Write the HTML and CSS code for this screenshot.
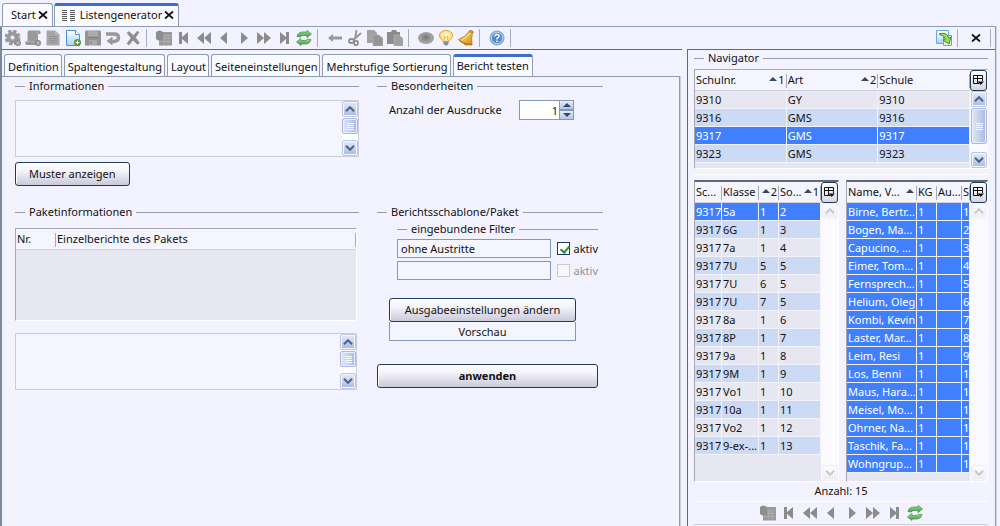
FILE: index.html
```html
<!DOCTYPE html>
<html lang="de">
<head>
    <meta charset="UTF-8">
    <meta name="viewport" content="width=device-width, initial-scale=1">
    <title>Listengenerator</title>
    <link rel="stylesheet" href="styles.css">
</head>
<body>
    <!-- Icon set -->
    <svg class="sprite" aria-hidden="true">
        <linearGradient id="greenFill" x1="0" y1="0" x2="0" y2="1"><stop offset="0" stop-color="#a5dc9c"/><stop offset="1" stop-color="#3f9a3c"/></linearGradient>
        <linearGradient id="blueFill" x1="0" y1="0" x2="0" y2="1"><stop offset="0" stop-color="#ffffff"/><stop offset="1" stop-color="#a5d4f5"/></linearGradient>
        <linearGradient id="goldFill" x1="0" y1="0" x2="1" y2="1"><stop offset="0" stop-color="#ffe27a"/><stop offset="1" stop-color="#d98e10"/></linearGradient>
        <radialGradient id="bulbFill"><stop offset="0" stop-color="#ffffff"/><stop offset="1" stop-color="#ffdf7c"/></radialGradient>
        <radialGradient id="helpFill"><stop offset="0" stop-color="#3d78bd"/><stop offset="1" stop-color="#6ba0d8"/></radialGradient>
        <symbol id="gear" viewBox="0 0 16 16"><g fill="none" stroke="#999"><circle cx="7.500" cy="7.500" r="4" stroke-width="4"/><circle cx="7.500" cy="7.500" r="6.500" stroke-width="3" stroke-dasharray="3.200 1.900"/></g><circle cx="13" cy="13" r="3" fill="#888"/><path d="M11 13h4M13 11v4" stroke="#c4c4c4"/></symbol>
        <symbol id="scroll" viewBox="0 0 16 16"><path d="M4 .5h10q2 0 1.500 3.500h-2.500v7q0 4-2.500 4H1.500Q0 14.500 .5 11h2V3Q2.500 .5 4 .5z" fill="#999"/><path d="M12.500 1.500V4M1 11.500h8.500" stroke="#b4b4b4" fill="none"/><circle cx="13" cy="13" r="3" fill="#888"/><path d="M11 13h4M13 11v4" stroke="#c4c4c4"/></symbol>
        <symbol id="page" viewBox="0 0 16 16"><path d="M1.500 .5h8.500l4.500 4v11h-13z" fill="#a6a6a6"/><path d="M10 .5v4h4.500" fill="#bbb"/><path d="M4 6.500h8M4 8.500h8M4 10.500h8M4 12.500h8" stroke="#959595"/></symbol>
        <symbol id="new" viewBox="0 0 16 16"><path d="M1.500 .5h9l4 4v11h-13z" fill="url(#blueFill)" stroke="#4b93cf"/><path d="M10.500 .5v4h4" fill="#fff" stroke="#4b93cf"/><circle cx="12.500" cy="12.500" r="3.500" fill="#4f9a35"/><path d="M10.500 12.500h4M12.500 10.500v4" stroke="#fff"/></symbol>
        <symbol id="save" viewBox="0 0 16 16"><path d="M1 .5h14l1 1v14H0v-14z" fill="#939393"/><path d="M3 1h10v5.500H3zM4 10h8v5H4z" fill="#aaa"/><path d="M3 7.500h10M6 11v3" stroke="#808080"/></symbol>
        <symbol id="undo" viewBox="0 0 16 16"><path d="M1 4h8q4.500 0 4.500 3.500T9 11.500H6" fill="none" stroke="#999" stroke-width="3.400"/><path d="M7.500 6.500v9L1.500 11z" fill="#999"/></symbol>
        <symbol id="delete" viewBox="0 0 16 16"><path d="M2 3l2-1.500 4.500 4L12.500 1l1.500 1.500L10.500 7.500l4 5.500-2 1.500-4.500-4.500L4 15l-2-1.500 4-5.500z" fill="#8f8f8f" stroke="#8f8f8f" stroke-width=".6" stroke-linejoin="round"/></symbol>
        <symbol id="sheet" viewBox="0 0 16 16"><path d="M4 2h12v13.500H3V8z" fill="#9a9a9a"/><path d="M7 5.500h8M4 8.500h11M4 11.500h11M8.500 5v9M12 5v9" stroke="#adadad"/><path d="M0 2q3.500-3 7 0v7q-3.500 3-7 0z" fill="#8e8e8e"/></symbol>
        <symbol id="first" viewBox="0 0 16 16"><path d="M3 2h3v5l6-5v12L6 9v5H3z" fill="#8c8c8c"/></symbol>
        <symbol id="rewind" viewBox="0 0 16 16"><path d="M1 8l7-6v12zM8 8l7-6v12z" fill="#8c8c8c"/></symbol>
        <symbol id="prev" viewBox="0 0 16 16"><path d="M4 8l7-6v12z" fill="#8c8c8c"/></symbol>
        <symbol id="next" viewBox="0 0 16 16"><path d="M12 8L5 2v12z" fill="#8c8c8c"/></symbol>
        <symbol id="forward" viewBox="0 0 16 16"><path d="M15 8L8 2v12zM8 8L1 2v12z" fill="#8c8c8c"/></symbol>
        <symbol id="last" viewBox="0 0 16 16"><path d="M13 2h-3v5L4 2v12l6-5v5h3z" fill="#8c8c8c"/></symbol>
        <symbol id="refresh" viewBox="0 0 16 16"><g fill="url(#greenFill)" stroke="#3c9140" stroke-width=".7"><path d="M1 6.500Q2 1.500 8 2h3V.5L15.500 4 11 7.500V5.500H8Q5 5 4.500 7z"/><path d="M15 9.500q-1 5-7 4.500H5v1.500L.5 12 5 8.500v2h3q3 .5 3.500-1.500z"/></g></symbol>
        <symbol id="back" viewBox="0 0 16 16"><path d="M1 8l5-4v2.500h9v3H6V12z" fill="#999"/></symbol>
        <symbol id="cut" viewBox="0 0 16 16"><path d="M9.500 0L8 9M14 3L6.500 10" stroke="#999" stroke-width="2"/><g fill="none" stroke="#8c8c8c" stroke-width="1.800"><ellipse cx="4.500" cy="11" rx="2.500" ry="2"/><ellipse cx="9" cy="13" rx="2" ry="2.200"/></g></symbol>
        <symbol id="copy" viewBox="0 0 16 16"><path d="M0 0h7l3 3v10H0z" fill="#a2a2a2"/><path d="M6 5h6l4 3.500V16H6z" fill="#959595" stroke="#b4b4b4" stroke-width=".6"/></symbol>
        <symbol id="paste" viewBox="0 0 16 16"><path d="M0 2h4l1-2h4l1 2h3v12H0z" fill="#8c8c8c"/><path d="M7 5h5l4 3.500V16H7z" fill="#a0a0a0" stroke="#bbb" stroke-width=".6"/></symbol>
        <symbol id="eye" viewBox="0 0 16 16"><ellipse cx="8" cy="8" rx="8" ry="6" fill="#a0a0a0"/><ellipse cx="8" cy="7.500" rx="4" ry="3.500" fill="#8c8c8c"/><circle cx="8" cy="7.500" r="1.500" fill="#777"/></symbol>
        <symbol id="bulb" viewBox="0 0 16 16"><path d="M5 10.500Q1 8 1.500 5 2.500 .5 8 .5t6.500 4.500q.5 3-3.500 5.500v1H5z" fill="url(#bulbFill)" stroke="#e2a02c"/><path d="M6.500 10L6 6l2 1.500L10 6l-.5 4" fill="none" stroke="#f0b94c"/><path d="M5.500 11.500h5v2.500L9 15.500H7L5.500 14z" fill="#8090a8"/></symbol>
        <symbol id="bell" viewBox="0 0 16 16"><path d="M.5 9.500Q7 7.500 11 1.500l3.500 1q-1.500 6-.5 12.500Q6 15.500 .5 9.500z" fill="url(#goldFill)" stroke="#ad6d0c" stroke-width=".8"/><path d="M10.500 1.500Q12 0 14 .8t1 2.200M1 10.500q5.500 4.500 13 3.500M6 13q1 3.500 4 1.500" fill="#e0a02b" stroke="#ad6d0c" stroke-width=".8"/><path d="M5 9.500Q9 7 11.500 3.500" fill="none" stroke="#fff0a8"/></symbol>
        <symbol id="help" viewBox="0 0 16 16"><circle cx="8" cy="8" r="7" fill="url(#helpFill)" stroke="#7ba6d4"/><circle cx="8" cy="8" r="5.800" fill="none" stroke="#d8e8f8" stroke-width=".8"/><path d="M6 6.500Q6 4.500 8 4.500t2 1.800Q10 7.500 8 8.200V9.500M8 10.500V12" fill="none" stroke="#fff" stroke-width="1.500"/></symbol>
        <symbol id="transfer" viewBox="0 0 16 16"><path d="M.5 .5h12v13H.5z" fill="url(#blueFill)" stroke="#6aa6da"/><path d="M7.500 5.500h8v10h-8z" fill="#dff0ff" stroke="#6aa6da"/><path d="M3 4q8-2.500 9.500 4l2.500-.5-2 6.500-6-4 2.500-1Q8.500 5.500 3 4z" fill="#a5dc4c" stroke="#3e8e2c"/></symbol>
        <symbol id="list" viewBox="0 0 13 11"><path d="M0 .5h5M0 2.500h5M0 4.500h5M0 6.500h5M0 8.500h5M0 10.500h5M8 .5h5M8 2.500h5M8 4.500h5M8 6.500h5M8 8.500h5M8 10.500h5" stroke="#555"/></symbol>
        <symbol id="close" viewBox="0 0 10 10"><path d="M1 1.500l8 7M9 1.500l-8 7" stroke="#111" stroke-width="1.700"/></symbol>
        <symbol id="columns" viewBox="0 0 11 11"><path d="M9.500 6V.5H.5v8H6M.5 3.500h9M4.500 .5v8" fill="none" stroke="#111"/><path d="M4.500 6.500H11L7.700 10z" fill="#111"/></symbol>
        <symbol id="up" viewBox="0 0 10 6"><path d="M1 5.200l4-4 4 4" fill="none" stroke="currentColor" stroke-width="2"/></symbol>
        <symbol id="down" viewBox="0 0 10 6"><path d="M1 .8l4 4 4-4" fill="none" stroke="currentColor" stroke-width="2"/></symbol>
        <symbol id="sort" viewBox="0 0 8 4"><path d="M0 4l4-4 4 4z" fill="#33475f"/></symbol>
    </svg>

    <!-- Window tabs -->
    <nav class="window-tabs">
        <button class="window-tab">Start <svg class="close"><use href="#close"/></svg></button>
        <button class="window-tab active"><svg class="list"><use href="#list"/></svg> Listengenerator <svg class="close"><use href="#close"/></svg></button>
    </nav>

    <div class="frame">
        <div class="toolbar">
            <button aria-label="Einstellungen"><svg><use href="#gear"/></svg></button>
            <button aria-label="Skript"><svg><use href="#scroll"/></svg></button>
            <button aria-label="Seite"><svg><use href="#page"/></svg></button>
            <button aria-label="Neu"><svg><use href="#new"/></svg></button>
            <button aria-label="Speichern"><svg><use href="#save"/></svg></button>
            <button aria-label="Rückgängig"><svg><use href="#undo"/></svg></button>
            <button aria-label="Löschen"><svg><use href="#delete"/></svg></button>
            <span class="sep"></span>
            <button aria-label="Datenblatt"><svg><use href="#sheet"/></svg></button>
            <button aria-label="Erster"><svg><use href="#first"/></svg></button>
            <button aria-label="Schnell zurück"><svg><use href="#rewind"/></svg></button>
            <button aria-label="Voriger"><svg><use href="#prev"/></svg></button>
            <button aria-label="Nächster"><svg><use href="#next"/></svg></button>
            <button aria-label="Schnell vor"><svg><use href="#forward"/></svg></button>
            <button aria-label="Letzter"><svg><use href="#last"/></svg></button>
            <button aria-label="Aktualisieren"><svg><use href="#refresh"/></svg></button>
            <span class="sep"></span>
            <button aria-label="Zurück"><svg><use href="#back"/></svg></button>
            <button aria-label="Ausschneiden"><svg><use href="#cut"/></svg></button>
            <button aria-label="Kopieren"><svg><use href="#copy"/></svg></button>
            <button aria-label="Einfügen"><svg><use href="#paste"/></svg></button>
            <span class="sep"></span>
            <button aria-label="Ansicht"><svg><use href="#eye"/></svg></button>
            <button aria-label="Tipp"><svg><use href="#bulb"/></svg></button>
            <button aria-label="Erinnerung"><svg><use href="#bell"/></svg></button>
            <span class="sep"></span>
            <button aria-label="Hilfe"><svg><use href="#help"/></svg></button>
            <span class="sep"></span>
            <div class="toolbar-right">
                <button aria-label="Übertragen"><svg><use href="#transfer"/></svg></button>
                <span class="sep"></span>
                <button class="wide" aria-label="Schließen"><svg class="close"><use href="#close"/></svg></button>
                <span class="sep"></span>
            </div>
        </div>

        <div class="content">
            <main class="editor">
                <nav class="tabs">
                    <button class="tab">Definition</button>
                    <button class="tab">Spaltengestaltung</button>
                    <button class="tab">Layout</button>
                    <button class="tab">Seiteneinstellungen</button>
                    <button class="tab">Mehrstufige Sortierung</button>
                    <button class="tab active">Bericht testen</button>
                </nav>
                <form class="form">
                    <fieldset>
                        <legend>Informationen</legend>
                        <div class="memo">
                            <textarea aria-label="Informationen"></textarea>
                            <div class="scrollbar">
                                <button type="button" aria-label="Nach oben"><svg><use href="#up"/></svg></button>
                                <span class="thumb"></span>
                                <button type="button" class="end" aria-label="Nach unten"><svg><use href="#down"/></svg></button>
                            </div>
                        </div>
                        <button type="button" class="btn sample">Muster anzeigen</button>
                    </fieldset>

                    <fieldset>
                        <legend>Besonderheiten</legend>
                        <div class="copies">
                            <label for="copies">Anzahl der Ausdrucke</label>
                            <input id="copies" type="text" value="1">
                            <div class="spinner">
                                <button type="button" aria-label="Mehr"><svg><use href="#sort"/></svg></button>
                                <button type="button" aria-label="Weniger"><svg class="flip"><use href="#sort"/></svg></button>
                            </div>
                        </div>
                    </fieldset>

                    <fieldset>
                        <legend>Paketinformationen</legend>
                        <div class="grid-box package">
                            <table>
                                <colgroup><col class="w-nr"><col></colgroup>
                                <thead><tr><th>Nr.</th><th>Einzelberichte des Pakets</th></tr></thead>
                            </table>
                        </div>
                        <div class="memo">
                            <textarea aria-label="Paketbeschreibung"></textarea>
                            <div class="scrollbar">
                                <button type="button" aria-label="Nach oben"><svg><use href="#up"/></svg></button>
                                <span class="thumb"></span>
                                <button type="button" class="end" aria-label="Nach unten"><svg><use href="#down"/></svg></button>
                            </div>
                        </div>
                    </fieldset>

                    <fieldset>
                        <legend>Berichtsschablone/Paket</legend>
                        <fieldset class="filters">
                            <legend>eingebundene Filter</legend>
                            <div class="filter">
                                <input type="text" aria-label="Filter 1" value="ohne Austritte">
                                <label><input type="checkbox" checked> aktiv</label>
                            </div>
                            <div class="filter">
                                <input type="text" aria-label="Filter 2">
                                <label class="off"><input type="checkbox" disabled> aktiv</label>
                            </div>
                        </fieldset>
                        <div class="output">
                            <button type="button" class="btn">Ausgabeeinstellungen ändern</button>
                            <input type="text" aria-label="Ausgabe" value="Vorschau" readonly>
                        </div>
                        <button type="submit" class="btn apply">anwenden</button>
                    </fieldset>
                </form>
            </main>

            <aside class="navigator">
                <fieldset>
                    <legend>Navigator</legend>
                    <div class="grid-box schools">
                        <table>
                            <thead><tr>
                                <th>Schulnr.<span class="order"><svg><use href="#sort"/></svg>1</span></th>
                                <th>Art<span class="order"><svg><use href="#sort"/></svg>2</span></th>
                                <th>Schule</th>
                            </tr></thead>
                            <tbody>
                                <tr><td>9310</td><td>GY</td><td>9310</td></tr>
                                <tr class="alt"><td>9316</td><td>GMS</td><td>9316</td></tr>
                                <tr class="sel"><td>9317</td><td>GMS</td><td>9317</td></tr>
                                <tr class="alt"><td>9323</td><td>GMS</td><td>9323</td></tr>
                            </tbody>
                        </table>
                        <div class="side">
                            <button class="column-btn" aria-label="Spalten"><svg><use href="#columns"/></svg></button>
                            <div class="scrollbar">
                                <button aria-label="Nach oben"><svg><use href="#up"/></svg></button>
                                <span class="thumb tall"></span>
                                <button class="end" aria-label="Nach unten"><svg><use href="#down"/></svg></button>
                            </div>
                        </div>
                    </div>
                </fieldset>

                <div class="lists">
                    <div class="grid-box classes">
                        <table>
                            <colgroup><col class="w-school"><col class="w-class"><col class="w-num"><col></colgroup>
                            <thead><tr>
                                <th>Sc...</th>
                                <th>Klasse</th>
                                <th><span class="order"><svg><use href="#sort"/></svg>2</span></th>
                                <th>So...<span class="order"><svg><use href="#sort"/></svg>1</span></th>
                            </tr></thead>
                            <tbody>
                                <tr class="sel"><td>9317</td><td>5a</td><td>1</td><td>2</td></tr>
                                <tr class="alt"><td>9317</td><td>6G</td><td>1</td><td>3</td></tr>
                                <tr><td>9317</td><td>7a</td><td>1</td><td>4</td></tr>
                                <tr class="alt"><td>9317</td><td>7U</td><td>5</td><td>5</td></tr>
                                <tr><td>9317</td><td>7U</td><td>6</td><td>5</td></tr>
                                <tr class="alt"><td>9317</td><td>7U</td><td>7</td><td>5</td></tr>
                                <tr><td>9317</td><td>8a</td><td>1</td><td>6</td></tr>
                                <tr class="alt"><td>9317</td><td>8P</td><td>1</td><td>7</td></tr>
                                <tr><td>9317</td><td>9a</td><td>1</td><td>8</td></tr>
                                <tr class="alt"><td>9317</td><td>9M</td><td>1</td><td>9</td></tr>
                                <tr><td>9317</td><td>Vo1</td><td>1</td><td>10</td></tr>
                                <tr class="alt"><td>9317</td><td>10a</td><td>1</td><td>11</td></tr>
                                <tr><td>9317</td><td>Vo2</td><td>1</td><td>12</td></tr>
                                <tr class="alt"><td>9317</td><td>9-ex-...</td><td>1</td><td>13</td></tr>
                            </tbody>
                        </table>
                        <div class="side">
                            <button class="column-btn" aria-label="Spalten"><svg><use href="#columns"/></svg></button>
                            <div class="scrollbar idle">
                                <button aria-label="Nach oben"><svg><use href="#up"/></svg></button>
                                <button class="end" aria-label="Nach unten"><svg><use href="#down"/></svg></button>
                            </div>
                        </div>
                    </div>

                    <div class="grid-box pupils">
                        <table>
                            <colgroup><col><col class="w-kg"><col class="w-au"><col class="w-s"></colgroup>
                            <thead><tr>
                                <th>Name, V...<span class="order"><svg><use href="#sort"/></svg></span></th>
                                <th>KG</th>
                                <th>Au...</th>
                                <th>S</th>
                            </tr></thead>
                            <tbody>
                                <tr class="sel"><td>Birne, Bertr...</td><td>1</td><td></td><td>1</td></tr>
                                <tr class="sel"><td>Bogen, Ma...</td><td>1</td><td></td><td>2</td></tr>
                                <tr class="sel"><td>Capucino, ...</td><td>1</td><td></td><td>3</td></tr>
                                <tr class="sel"><td>Eimer, Tom...</td><td>1</td><td></td><td>4</td></tr>
                                <tr class="sel"><td>Fernsprech...</td><td>1</td><td></td><td>5</td></tr>
                                <tr class="sel"><td>Helium, Oleg</td><td>1</td><td></td><td>6</td></tr>
                                <tr class="sel"><td>Kombi, Kevin</td><td>1</td><td></td><td>7</td></tr>
                                <tr class="sel"><td>Laster, Mar...</td><td>1</td><td></td><td>8</td></tr>
                                <tr class="sel"><td>Leim, Resi</td><td>1</td><td></td><td>9</td></tr>
                                <tr class="sel"><td>Los, Benni</td><td>1</td><td></td><td>1</td></tr>
                                <tr class="sel"><td>Maus, Hara...</td><td>1</td><td></td><td>1</td></tr>
                                <tr class="sel"><td>Meisel, Mo...</td><td>1</td><td></td><td>1</td></tr>
                                <tr class="sel"><td>Ohrner, Na...</td><td>1</td><td></td><td>1</td></tr>
                                <tr class="sel"><td>Taschik, Fa...</td><td>1</td><td></td><td>1</td></tr>
                                <tr class="sel"><td>Wohngrup...</td><td>1</td><td></td><td>1</td></tr>
                            </tbody>
                        </table>
                        <div class="side">
                            <button class="column-btn" aria-label="Spalten"><svg><use href="#columns"/></svg></button>
                            <div class="scrollbar idle">
                                <button aria-label="Nach oben"><svg><use href="#up"/></svg></button>
                                <button class="end" aria-label="Nach unten"><svg><use href="#down"/></svg></button>
                            </div>
                        </div>
                    </div>
                </div>

                <p class="count">Anzahl: 15</p>
                <div class="pager">
                    <button aria-label="Datenblatt"><svg><use href="#sheet"/></svg></button>
                    <button aria-label="Erster"><svg><use href="#first"/></svg></button>
                    <button aria-label="Schnell zurück"><svg><use href="#rewind"/></svg></button>
                    <button aria-label="Voriger"><svg><use href="#prev"/></svg></button>
                    <button aria-label="Nächster"><svg><use href="#next"/></svg></button>
                    <button aria-label="Schnell vor"><svg><use href="#forward"/></svg></button>
                    <button aria-label="Letzter"><svg><use href="#last"/></svg></button>
                    <button aria-label="Aktualisieren"><svg><use href="#refresh"/></svg></button>
                </div>
            </aside>
        </div>
    </div>
</body>
</html>
```

FILE: styles.css
```css
* {
    box-sizing: border-box;
}
body {
    margin: 0;
    min-height: 100vh;
    display: flex;
    flex-direction: column;
    background: #f3f3ff;
    color: #111;
    font-family: "Noto Sans", "Open Sans", sans-serif;
    font-size: 11px;
    line-height: 14px;
}
button, input, textarea {
    margin: 0;
    padding: 0;
    border: 0;
    border-radius: 0;
    background: none;
    color: inherit;
    font: inherit;
}
fieldset {
    min-width: 0;
    margin: 0;
    padding: 0;
    border: 0;
    border-top: 1px solid #999aa6;
}
legend {
    margin-left: 10px;
    padding: 0 4px;
}
.sprite {
    position: absolute;
    width: 0;
    height: 0;
}

/* Window tabs */
.window-tabs {
    display: flex;
    gap: 1px;
    padding: 3px 2px 0;
}
.window-tab {
    display: flex;
    align-items: center;
    gap: 2px;
    height: 23px;
    padding: 0 4px 0 8px;
    border: 1px solid #8c9cb8;
    border-bottom: 0;
    border-radius: 3px 3px 0 0;
    background: #fbfbff;
}
.window-tab.active {
    padding: 0 4px 2px 7px;
    border-top: 3px solid #3d6ecb;
}
.close {
    width: 10px;
    height: 10px;
}
.list {
    width: 13px;
    height: 11px;
    margin-right: 3px;
}

/* Frame and toolbar */
.frame {
    flex: 1;
    display: flex;
    flex-direction: column;
    margin-right: 4px;
    border: 1px solid #8c9cb8;
    border-bottom: 0;
    border-left: 2px solid #7d8799;
    box-shadow: 1px 0 #d4d6e2;
}
.toolbar {
    display: flex;
    align-items: center;
    height: 22px;
    padding-left: 1px;
}
.toolbar button, .pager button {
    display: flex;
    align-items: center;
    justify-content: center;
    width: 20px;
    height: 20px;
}
.toolbar svg, .pager svg {
    width: 16px;
    height: 16px;
}
.toolbar .close {
    width: 10px;
    height: 10px;
}
.sep {
    width: 1px;
    height: 18px;
    margin: 0 7px 0 3px;
    background: #a9abb8;
}
.toolbar-right {
    display: flex;
    align-items: center;
    margin-left: auto;
}
.toolbar-right .sep {
    margin: 0 4px 0 3px;
}
.toolbar-right .wide {
    margin: 0 1px 0 4px;
}
.content {
    flex: 1;
    display: flex;
    gap: 5px;
}
.editor {
    flex: 1;
    min-width: 0;
    display: flex;
    flex-direction: column;
    padding: 4px 2px 0 0;
    border-top: 1px solid #66686f;
}

/* Editor tabs */
.tabs {
    display: flex;
    gap: 2px;
    padding-left: 2px;
}
.tab {
    height: 22px;
    padding: 3px 2px 0 3px;
    border: 1px solid #8c9cb8;
    border-bottom: 0;
    border-radius: 3px 3px 0 0;
    background: #fbfbff;
    white-space: nowrap;
}
.tab.active {
    padding: 0 3px 2px;
    border-top: 3px solid #3d6ecb;
}

/* Report form */
.form {
    flex: 1;
    display: grid;
    grid-template-columns: minmax(0, 344px) minmax(0, 226px);
    grid-template-rows: auto auto;
    align-content: start;
    gap: 19px 18px;
    padding: 2px 13px 0;
    border: 1px solid #8c9cb8;
    border-width: 1px 1px 0 0;
    box-shadow: 1px 0 #c9cddb;
}
.memo {
    display: flex;
    height: 57px;
    margin-top: 7px;
    border: 1px solid #ccccdb;
    background: #f5f5ff;
}
.memo textarea {
    flex: 1;
    resize: none;
    overflow: hidden;
}
.package + .memo {
    margin: 12px 2px 0 0;
}
.btn {
    height: 24px;
    padding: 0 13px;
    border: 1px solid #1f3a5f;
    border-radius: 3px;
    background: linear-gradient(#fff, #f1f1f9 40%, #c9c9d9);
    box-shadow: inset 1px 1px #fff;
}
.sample {
    display: block;
    margin-top: 5px;
}
.copies {
    display: flex;
    align-items: center;
    margin: 7px 0 0 12px;
}
.copies label {
    flex: 0 0 130px;
}
.copies input {
    width: 41px;
    height: 20px;
    padding-right: 1px;
    border: 1px solid #8399b8;
    background: #fff;
    text-align: right;
}
.spinner {
    display: flex;
    flex-direction: column;
    width: 14px;
}
.spinner button {
    display: flex;
    align-items: center;
    justify-content: center;
    height: 10px;
    border: 1px solid #8399b8;
    border-left: 0;
    background: linear-gradient(#e6edfb, #b4c4e8);
}
.spinner svg {
    width: 8px;
    height: 4px;
}
.spinner .flip {
    transform: rotate(180deg);
}
.filters {
    margin: 3px 5px 0 20px;
}
.filter {
    display: flex;
    align-items: center;
    gap: 6px;
    margin-top: 3px;
}
.filter input[type="text"] {
    flex: 0 1 154px;
    min-width: 0;
    height: 19px;
    padding: 0 3px;
    border: 1px solid #8399b8;
    background: #f4f5ff;
}
.filter label {
    display: flex;
    align-items: center;
    gap: 4px;
}
.filter .off {
    color: #8f8f9a;
}
.filter input[type="checkbox"] {
    appearance: none;
    display: flex;
    width: 13px;
    height: 13px;
    border: 1px solid #1f3a5f;
    background: #fff;
}
.filter input:checked::before {
    content: "";
    width: 4px;
    height: 7px;
    margin: 1px 0 0 4px;
    border: solid #2c962c;
    border-width: 0 2px 2px 0;
    transform: rotate(40deg);
}
.filter input:disabled {
    border-color: #c9c9d4;
    background: #f8f8fa;
}
.output {
    display: flex;
    flex-direction: column;
    margin: 18px 27px 0 12px;
}
.output input {
    width: 100%;
    height: 19px;
    border: 1px solid #8399b8;
    border-top: 0;
    background: #f4f5ff;
    text-align: center;
}
.apply {
    width: 221px;
    max-width: 100%;
    margin-top: 23px;
    font-weight: bold;
}

/* Scrollbars */
.scrollbar {
    flex: none;
    display: flex;
    flex-direction: column;
    gap: 1px;
    width: 16px;
    background: #fff;
}
.scrollbar button {
    display: flex;
    align-items: center;
    justify-content: center;
    height: 16px;
    border: 1px solid #b9c6e4;
    border-radius: 2px;
    background: linear-gradient(#e4ebfa, #a9b9df);
    box-shadow: inset 0 0 0 1px #f4f7ff;
    color: #4b6186;
}
.scrollbar svg {
    width: 10px;
    height: 6px;
}
.scrollbar .end {
    margin-top: auto;
}
.thumb {
    height: 16px;
    border: 1px solid #a9b8dc;
    border-radius: 2px;
    background:
        repeating-linear-gradient(#f4f7ff 0 1px, transparent 1px 2px) center / 7px 7px no-repeat,
        linear-gradient(90deg, #dfe7fa, #a9b9df);
    box-shadow: inset 0 0 0 1px #e9effc;
}
.thumb.tall {
    height: 36px;
}
.scrollbar.idle button {
    border-color: #f0f0f5;
    background: linear-gradient(#fdfdff, #ebebf2);
    color: #c9c9d1;
}

/* Data grids */
.grid-box {
    display: flex;
    align-items: flex-start;
    border: 1px solid #fff;
    border-top-color: #a6a7b3;
    border-left-color: #a6a7b3;
    background: #e7e7f1;
}
table {
    flex: 1;
    width: 0;
    table-layout: fixed;
    border-spacing: 0;
}
th, td {
    overflow: hidden;
    padding: 0 0 0 1px;
    text-align: left;
    white-space: nowrap;
}
th {
    position: relative;
    height: 21px;
    border-bottom: 1px solid #d0d0dc;
    background: linear-gradient(#a9abb8, #a9abb8) right 4px / 1px 14px no-repeat #f5f5ff;
    font-weight: normal;
}
td {
    height: 18px;
    border-right: 1px solid #f1f2fb;
    border-bottom: 1px solid #f1f2fb;
}
/* Sort marker lies over the end of the heading */
.order {
    position: absolute;
    top: 3px;
    right: 2px;
}
.order svg {
    width: 8px;
    height: 4px;
    margin: 0 1px 3px 0;
}
.alt td {
    background: #cddaf6;
}
.sel td {
    background: #4080ff;
    color: #fff;
}
.side {
    align-self: stretch;
    display: flex;
    flex-direction: column;
    width: 17px;
    background: #fbfbff;
}
.side .scrollbar {
    flex: 1;
    margin-left: 1px;
    background: none;
}
.column-btn {
    display: flex;
    align-items: center;
    justify-content: center;
    height: 21px;
    border: 1px solid #1f3a5f;
    border-radius: 3px;
    background: linear-gradient(#fff, #d6d6e2);
}
.column-btn svg {
    width: 11px;
    height: 11px;
}
.package {
    height: 93px;
    margin: 9px 2px 0 0;
}
.w-nr {
    width: 40px;
}

/* Navigator */
.navigator {
    flex: 0 0 308px;
    display: flex;
    flex-direction: column;
    padding: 1px 7px 0 6px;
    border-top: 1px solid #66686f;
    border-left: 1px solid #66686f;
}
.schools {
    height: 100px;
    margin-top: 4px;
}
.lists {
    display: flex;
    gap: 7px;
    margin-top: 5px;
    padding-top: 5px;
    border-top: 1px solid #fff;
}
.lists .grid-box {
    height: 302px;
    border-top: 2px solid #66686f;
}
.classes {
    flex: 0 0 145px;
}
.pupils {
    flex: 1;
}
.w-school {
    width: 27px;
}
.w-class {
    width: 37px;
}
.w-num {
    width: 20px;
}
.w-kg {
    width: 20px;
}
.w-au {
    width: 25px;
}
.w-s {
    width: 8px;
}
.count {
    margin: 0;
    padding: 2px 0 3px;
    text-align: center;
}
.pager {
    display: flex;
    justify-content: center;
    gap: 1px;
    padding: 1px 0;
    border-top: 1px solid #fff;
    border-bottom: 1px solid #cfcfda;
}
```
